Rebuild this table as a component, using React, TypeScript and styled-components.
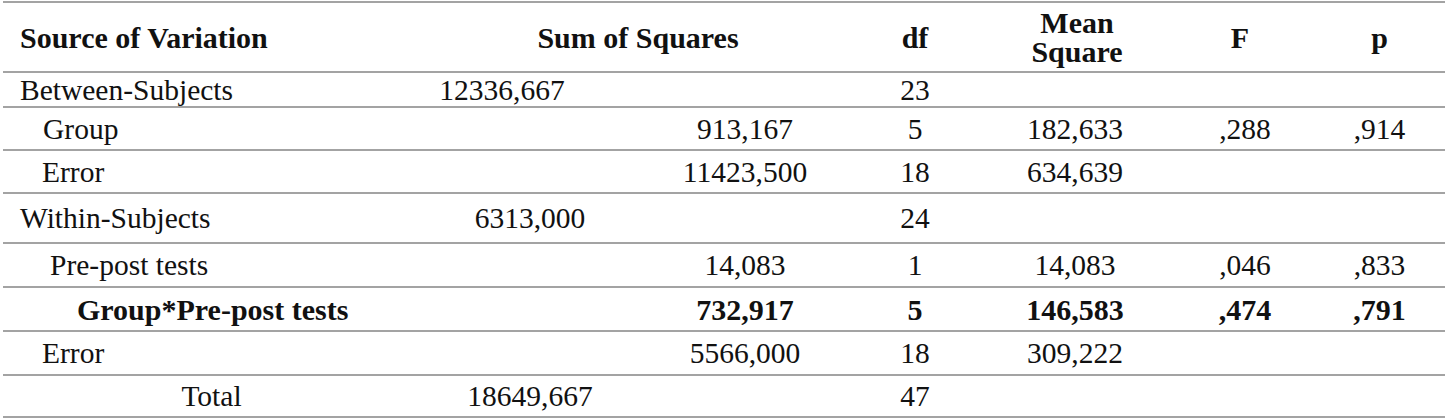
import React from "react";
import styled, { createGlobalStyle } from "styled-components";

const GlobalStyle = createGlobalStyle`
  html, body {
    margin: 0;
    padding: 0;
    background: #ffffff;
  }
  body {
    font-family: "Liberation Serif", "Times New Roman", serif;
    color: #111111;
  }
`;

const Page = styled.div`
  padding: 1px 6px 0 3px;
  width: 1442px;
`;

const Table = styled.div`
  border-top: 2px solid #a3a3a3;
  font-size: 29.5px;
`;

const columns = "417px 220px 210px 130px 190px 150px 125px";

const HeaderRow = styled.div`
  display: grid;
  grid-template-columns: ${columns};
  height: 70px;
  box-sizing: border-box;
  border-bottom: 2px solid #a3a3a3;
  align-items: center;
  font-weight: bold;
  font-size: 30px;
`;

const HeaderCell = styled.div<{ $span?: number; $align?: string; $shift?: number }>`
  grid-column: span ${(p) => p.$span ?? 1};
  text-align: ${(p) => p.$align ?? "center"};
  padding-left: ${(p) => (p.$align === "left" ? "17px" : "0")};
  line-height: 29px;
  white-space: nowrap;
  transform: translateX(${(p) => p.$shift ?? 0}px);
`;

const Row = styled.div<{ $height: number; $bold?: boolean }>`
  display: grid;
  grid-template-columns: ${columns};
  height: ${(p) => p.$height}px;
  box-sizing: border-box;
  border-bottom: 2px solid #a3a3a3;
  align-items: center;
  font-weight: ${(p) => (p.$bold ? "bold" : "normal")};
  font-size: ${(p) => (p.$bold ? "30px" : "29.5px")};
  line-height: 1;
`;

const SourceCell = styled.div<{ $indent: number; $center?: boolean }>`
  padding-left: ${(p) => (p.$center ? 0 : p.$indent)}px;
  text-align: ${(p) => (p.$center ? "center" : "left")};
  white-space: nowrap;
  padding-top: 2px;
`;

const ValueCell = styled.div<{ $shift?: number }>`
  text-align: center;
  white-space: nowrap;
  padding-top: 2px;
  transform: translateX(${(p) => p.$shift ?? 0}px);
`;

type RowData = {
  source: string;
  indent: number;
  center?: boolean;
  bold?: boolean;
  height: number;
  ss1?: string;
  ss1Shift?: number;
  ss2?: string;
  df: string;
  ms?: string;
  f?: string;
  p?: string;
};

const rows: RowData[] = [
  { source: "Between-Subjects", indent: 17, height: 35, ss1: "12336,667", ss1Shift: -28, df: "23" },
  { source: "Group", indent: 40, height: 43, ss2: "913,167", df: "5", ms: "182,633", f: ",288", p: ",914" },
  { source: "Error", indent: 39, height: 43, ss2: "11423,500", df: "18", ms: "634,639" },
  { source: "Within-Subjects", indent: 17, height: 50, ss1: "6313,000", df: "24" },
  { source: "Pre-post tests", indent: 47, height: 44, ss2: "14,083", df: "1", ms: "14,083", f: ",046", p: ",833" },
  { source: "Group*Pre-post tests", indent: 74, bold: true, height: 44, ss2: "732,917", df: "5", ms: "146,583", f: ",474", p: ",791" },
  { source: "Error", indent: 39, height: 44, ss2: "5566,000", df: "18", ms: "309,222" },
  { source: "Total", indent: 0, center: true, height: 42, ss1: "18649,667", df: "47" },
];

export default function App() {
  return (
    <>
      <GlobalStyle />
      <Page>
        <Table>
          <HeaderRow>
            <HeaderCell $align="left">Source of Variation</HeaderCell>
            <HeaderCell $span={2} $shift={3}>Sum of Squares</HeaderCell>
            <HeaderCell>df</HeaderCell>
            <HeaderCell $shift={2}>
              Mean
              <br />
              Square
            </HeaderCell>
            <HeaderCell $shift={-5}>F</HeaderCell>
            <HeaderCell $shift={-3}>p</HeaderCell>
          </HeaderRow>
          {rows.map((r, i) => (
            <Row key={i} $height={r.height} $bold={r.bold}>
              <SourceCell $indent={r.indent} $center={r.center}>
                {r.source}
              </SourceCell>
              <ValueCell $shift={r.ss1Shift}>{r.ss1 ?? ""}</ValueCell>
              <ValueCell>{r.ss2 ?? ""}</ValueCell>
              <ValueCell>{r.df}</ValueCell>
              <ValueCell>{r.ms ?? ""}</ValueCell>
              <ValueCell>{r.f ?? ""}</ValueCell>
              <ValueCell $shift={-3}>{r.p ?? ""}</ValueCell>
            </Row>
          ))}
        </Table>
      </Page>
    </>
  );
}
